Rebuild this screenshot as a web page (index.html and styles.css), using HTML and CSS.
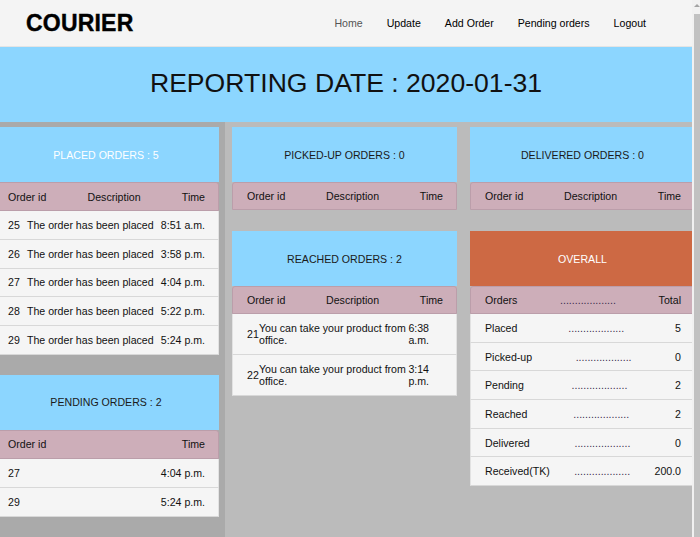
FILE: index.html
```html
<!DOCTYPE html>
<html lang="en">
<head>
<meta charset="utf-8">
<title>Courier</title>
<link rel="stylesheet" href="styles.css">
</head>
<body>
<header class="nav">
  <div class="brand">COURIER</div>
  <nav class="links">
    <a class="link muted" href="#">Home</a>
    <a class="link" href="#">Update</a>
    <a class="link" href="#">Add Order</a>
    <a class="link" href="#">Pending orders</a>
    <a class="link" href="#">Logout</a>
  </nav>
</header>
<section class="banner">REPORTING DATE : 2020-01-31</section>
<main class="board">
  <div class="cols">
    <div class="col col-a">
      <div class="card">
        <div class="card-head light">PLACED ORDERS : 5</div>
        <div class="thead"><span>Order id</span><span>Description</span><span>Time</span></div>
        <div class="row"><span>25</span><span>The order has been placed</span><span>8:51 a.m.</span></div>
        <div class="row"><span>26</span><span>The order has been placed</span><span>3:58 p.m.</span></div>
        <div class="row"><span>27</span><span>The order has been placed</span><span>4:04 p.m.</span></div>
        <div class="row"><span>28</span><span>The order has been placed</span><span>5:22 p.m.</span></div>
        <div class="row"><span>29</span><span>The order has been placed</span><span>5:24 p.m.</span></div>
      </div>
      <div class="card">
        <div class="card-head">PENDING ORDERS : 2</div>
        <div class="thead"><span>Order id</span><span>Time</span></div>
        <div class="row"><span>27</span><span>4:04 p.m.</span></div>
        <div class="row"><span>29</span><span>5:24 p.m.</span></div>
      </div>
    </div>
    <div class="col">
      <div class="card">
        <div class="card-head">PICKED-UP ORDERS : 0</div>
        <div class="thead"><span>Order id</span><span>Description</span><span>Time</span></div>
      </div>
      <div class="card">
        <div class="card-head">REACHED ORDERS : 2</div>
        <div class="thead"><span>Order id</span><span>Description</span><span>Time</span></div>
        <div class="row tall"><span class="rid">21</span><span class="rdesc">You can take your product from office.</span><span class="rtime">6:38 a.m.</span></div>
        <div class="row tall"><span class="rid">22</span><span class="rdesc">You can take your product from office.</span><span class="rtime">3:14 p.m.</span></div>
      </div>
    </div>
    <div class="col">
      <div class="card">
        <div class="card-head">DELIVERED ORDERS : 0</div>
        <div class="thead"><span>Order id</span><span>Description</span><span>Time</span></div>
      </div>
      <div class="card">
        <div class="card-head orange">OVERALL</div>
        <div class="thead"><span>Orders</span><span class="dots">...................</span><span>Total</span></div>
        <div class="row"><span>Placed</span><span class="dots">...................</span><span>5</span></div>
        <div class="row"><span>Picked-up</span><span class="dots">...................</span><span>0</span></div>
        <div class="row"><span>Pending</span><span class="dots">...................</span><span>2</span></div>
        <div class="row"><span>Reached</span><span class="dots">...................</span><span>2</span></div>
        <div class="row"><span>Delivered</span><span class="dots">...................</span><span>0</span></div>
        <div class="row"><span>Received(TK)</span><span class="dots">...................</span><span>200.0</span></div>
      </div>
    </div>
  </div>
</main>
<div class="scrollbar" aria-hidden="true"><span class="sb-arrow"></span><span class="sb-thumb"></span></div>
</body>
</html>
```
FILE: styles.css
```css
body {
  margin: 0 8px 0 0;
  font-family: "Liberation Sans", Arial, sans-serif;
  font-size: 10.6px;
  color: #111;
  background: #bbbbbb;
}
.scrollbar {
  position: fixed;
  top: 0;
  right: 0;
  bottom: 0;
  width: 8px;
  background: #f1f1f1;
}
.sb-arrow {
  position: absolute;
  top: 4px;
  left: 2px;
  width: 0;
  height: 0;
  border-left: 3px solid transparent;
  border-right: 3px solid transparent;
  border-bottom: 3px solid #a3a3a3;
}
.sb-thumb {
  position: absolute;
  top: 14px;
  left: 2px;
  right: 0;
  bottom: 0;
  background: #c1c1c1;
}
.nav {
  height: 46px;
  background: #f4f4f4;
  border-bottom: 1px solid #e4e4e4;
  display: flex;
  align-items: center;
  padding: 0 46px 0 26px;
}
.brand {
  font-weight: bold;
  font-size: 23px;
  color: #000;
  letter-spacing: 0.2px;
  -webkit-text-stroke: 0.4px #000;
}
.links {
  margin-left: auto;
  display: flex;
  gap: 24px;
}
.link {
  color: #000;
  text-decoration: none;
  font-size: 10.6px;
}
.link.muted {
  color: #555;
}
.banner {
  height: 75px;
  box-sizing: border-box;
  padding-bottom: 3px;
  background: #8cd6ff;
  display: flex;
  align-items: center;
  justify-content: center;
  font-size: 26.6px;
  color: #111;
}
.board {
  overflow: hidden;
}
.cols {
  display: grid;
  grid-template-columns: 239px 238px 238px;
  margin-left: -14px;
  min-height: 432px;
}
.col {
  padding: 5px 6px 0 7px;
}
.col-a {
  background: #aaaaaa;
}
.card {
  margin-bottom: 21px;
}
.col-a .card {
  margin-bottom: 20px;
}
.col-a .thead {
  height: 29px;
}
.col-a .row {
  height: 28.8px;
}
.card-head {
  height: 55px;
  background: #8cd6ff;
  display: flex;
  align-items: center;
  justify-content: center;
  color: #1a1a1a;
}
.card-head.light {
  color: #fff;
}
.card-head.orange {
  background: #cd6944;
  color: #fff;
}
.thead {
  height: 28px;
  box-sizing: border-box;
  background: #cdaeb9;
  border: 1px solid #bb9eaa;
  border-radius: 3px 3px 0 0;
  display: flex;
  align-items: center;
  justify-content: space-between;
  padding: 0 13px 0 14px;
}
.row {
  height: 28.7px;
  box-sizing: border-box;
  background: #f5f5f5;
  border: 1px solid #e2e2e2;
  border-top: 0;
  border-bottom: 1px solid #d8d8d8;
  display: flex;
  align-items: center;
  justify-content: space-between;
  padding: 0 13px 0 14px;
}
.row.tall {
  height: auto;
  padding-top: 8px;
  padding-bottom: 8px;
  justify-content: flex-start;
  line-height: 12px;
}
.rid {
  width: 12px;
  flex: none;
}
.rdesc {
  width: 148px;
  flex: none;
}
.rtime {
  width: 22px;
  flex: none;
  text-align: right;
}
.dots {
  color: #3a2a4a;
}
```
